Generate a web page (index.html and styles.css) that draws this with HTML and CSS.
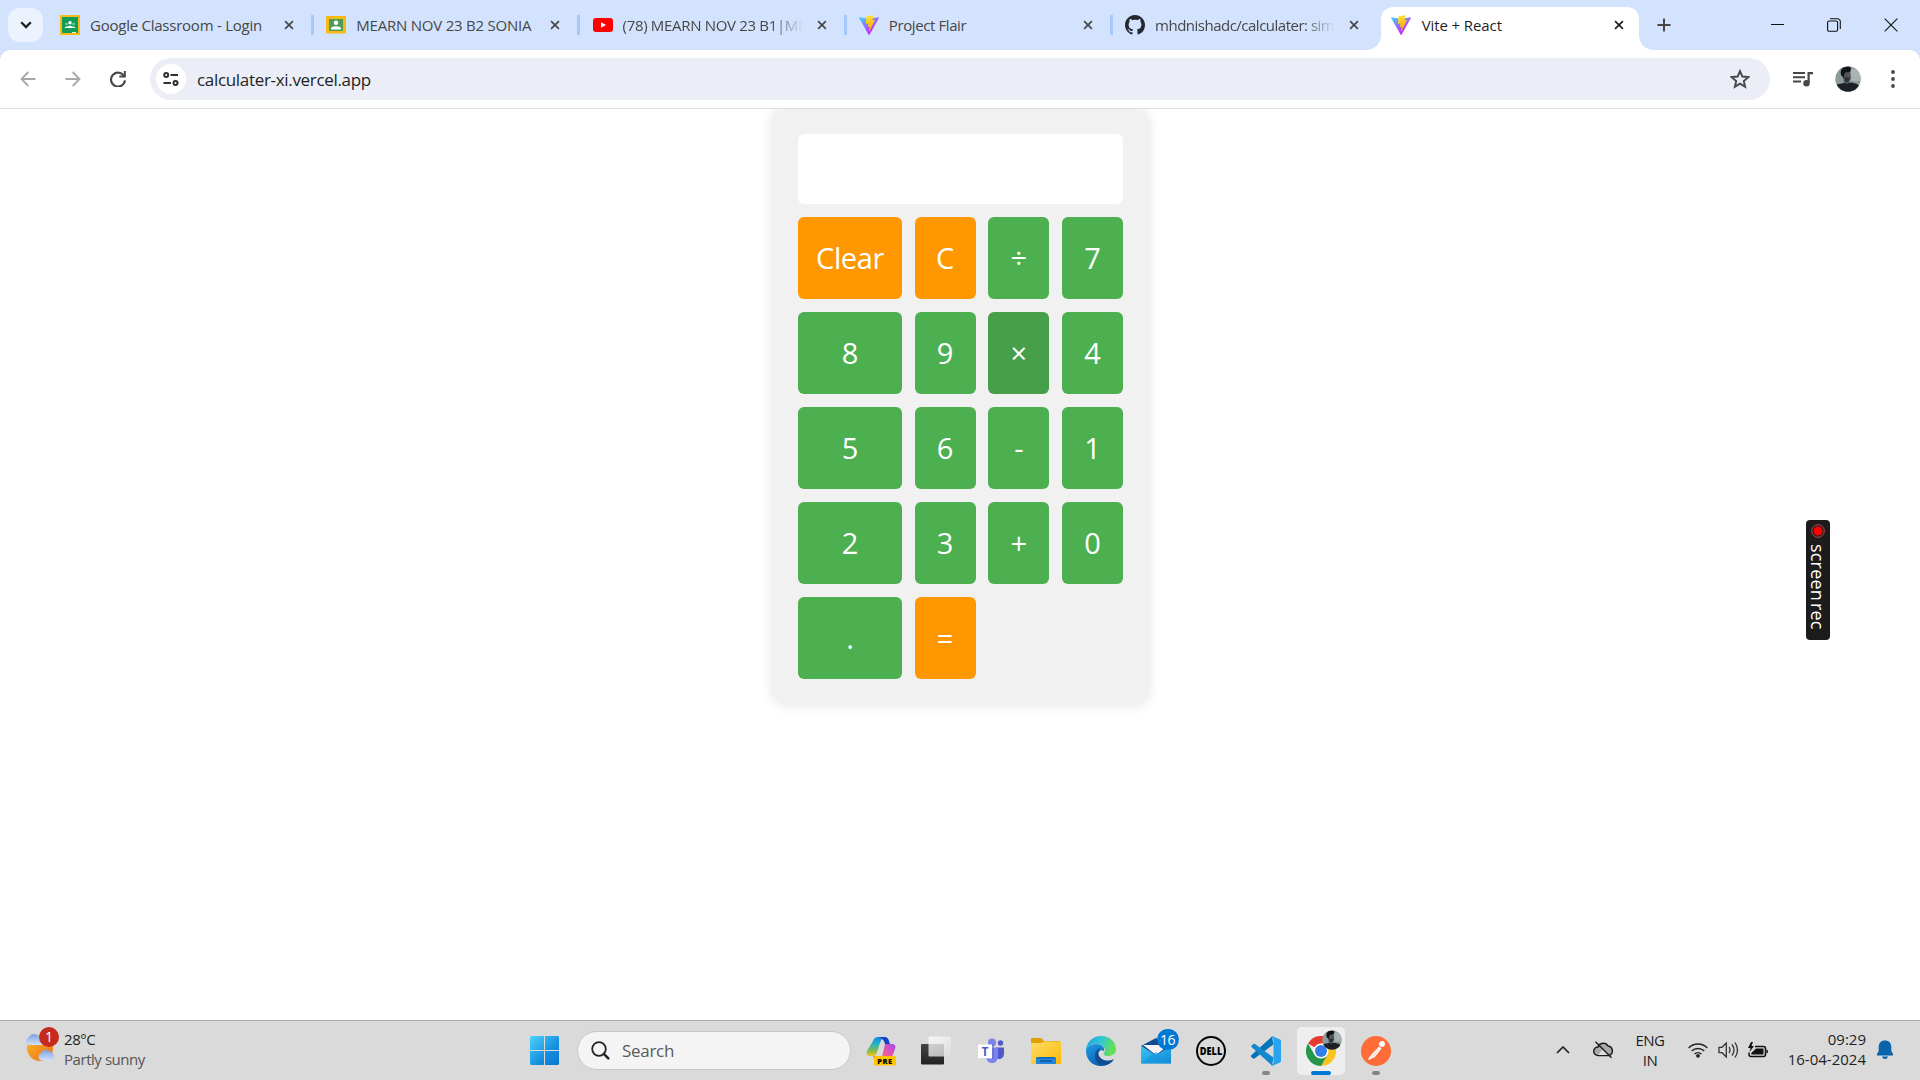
FILE: index.html
```html
<!DOCTYPE html>
<html lang="en">
<head>
<meta charset="utf-8">
<title>Vite + React</title>
<link rel="stylesheet" href="styles.css">
</head>
<body>
<svg class="defs" width="0" height="0">
  <defs>
    <linearGradient id="vA" x1="-.8%" x2="57.6%" y1="8%" y2="78%"><stop offset="0" stop-color="#41D1FF"/><stop offset="1" stop-color="#BD34FE"/></linearGradient>
    <linearGradient id="vB" x1="43%" x2="50%" y1="2%" y2="89%"><stop offset="0" stop-color="#FFEA83"/><stop offset=".08" stop-color="#FFDD35"/><stop offset="1" stop-color="#FFA800"/></linearGradient>
    <linearGradient id="win" gradientUnits="userSpaceOnUse" x1="0" y1="0" x2="29" y2="29"><stop offset="0" stop-color="#4fd3fb"/><stop offset=".6" stop-color="#1590de"/><stop offset="1" stop-color="#0775d0"/></linearGradient>
    <linearGradient id="cloud" x1="0" y1="0" x2="0" y2="1"><stop offset="0" stop-color="#7f9fe0"/><stop offset="1" stop-color="#cfe2fb"/></linearGradient>
    <linearGradient id="sun" x1="0" y1="0" x2="1" y2="1"><stop offset="0" stop-color="#f9ba28"/><stop offset="1" stop-color="#ef6d17"/></linearGradient>
    <linearGradient id="copA" x1="0" y1="0" x2="0" y2="1"><stop offset="0" stop-color="#1687e8"/><stop offset=".35" stop-color="#22b4c8"/><stop offset=".7" stop-color="#7bbd50"/><stop offset="1" stop-color="#f4c414"/></linearGradient>
    <linearGradient id="copB" x1="0" y1="1" x2="1" y2="0"><stop offset="0" stop-color="#fb7a55"/><stop offset=".5" stop-color="#e958a8"/><stop offset="1" stop-color="#9f4bea"/></linearGradient>
    <linearGradient id="folder" x1="0" y1="0" x2="1" y2="1"><stop offset="0" stop-color="#ffdd68"/><stop offset="1" stop-color="#fbb908"/></linearGradient>
    <linearGradient id="edgeA" x1="0" y1="0" x2="1" y2=".3"><stop offset="0" stop-color="#1a9fe0"/><stop offset=".5" stop-color="#30c4d8"/><stop offset="1" stop-color="#66e052"/></linearGradient>
    <linearGradient id="edgeB" x1="0" y1="0" x2=".7" y2="1"><stop offset="0" stop-color="#1b9de2"/><stop offset="1" stop-color="#0c57ac"/></linearGradient>
    <linearGradient id="mail" x1="0" y1="0" x2="1" y2="1"><stop offset="0" stop-color="#37c9f3"/><stop offset="1" stop-color="#1286d6"/></linearGradient>
    <linearGradient id="tvA" x1="0" y1="0" x2="0" y2="1"><stop offset="0" stop-color="#444"/><stop offset="1" stop-color="#222"/></linearGradient>
    <linearGradient id="tvB" x1="0" y1="0" x2="1" y2="1"><stop offset="0" stop-color="#fff"/><stop offset="1" stop-color="#ddd"/></linearGradient>
    <symbol id="vite" viewBox="0 0 256 257"><path fill="url(#vA)" d="M255.153 37.938L134.897 252.976c-2.483 4.44-8.862 4.466-11.382.048L.875 37.958c-2.746-4.814 1.371-10.646 6.827-9.67l120.385 21.517a6.537 6.537 0 0 0 2.322-.004l117.867-21.483c5.438-.991 9.574 4.796 6.877 9.62Z"/><path fill="url(#vB)" d="M185.432.063L96.44 17.501a3.268 3.268 0 0 0-2.634 3.014l-5.474 92.456a3.268 3.268 0 0 0 3.997 3.378l24.777-5.718c2.318-.535 4.413 1.507 3.936 3.838l-7.361 36.047c-.495 2.426 1.782 4.5 4.151 3.78l15.304-4.649c2.372-.72 4.652 1.36 4.15 3.788l-11.698 56.621c-.732 3.542 3.979 5.473 5.943 2.437l1.313-2.028l72.516-144.72c1.215-2.423-.88-5.186-3.54-4.672l-25.505 4.922c-2.396.462-4.435-1.77-3.759-4.114l16.646-57.705c.677-2.35-1.37-4.583-3.769-4.113Z"/></symbol>
    <symbol id="x" viewBox="0 0 12 12"><path d="M1.3 1.3 10.7 10.7M10.7 1.3 1.3 10.7" stroke="currentColor" stroke-width="2" fill="none"/></symbol>
    <symbol id="face" viewBox="0 0 26 26"><clipPath id="fc"><circle cx="13" cy="13" r="12.7"/></clipPath><g clip-path="url(#fc)"><path fill="#8c9b9b" d="M0 0h26v26H0z"/><path fill="#a9b3b2" d="M16 3h10v12H16z"/><path fill="#1c2128" d="M0 26c1-6 1-8 4-8l5-1 7-.5c5 1 7 1 8 4l2 6z"/><path fill="#515557" d="M8 6h7l1 6-2 4-1 2-4-1-1-6z"/><path fill="#111417" d="M6 9c-1-5 1-8 5-8 3-1 5 0 5 2l-1 3-5 .5-1 3v3z"/><path fill="#292f33" d="m10 11 5 1-2 4-3-1z"/></g></symbol>
  </defs>
</svg>

<header class="tabstrip">
  <button class="tab-search"><svg width="12" height="8" viewBox="0 0 12 8"><path d="M1.2 1.2 6 6l4.800-4.800" fill="none" stroke="#1f1f1f" stroke-width="2.300"/></svg></button>
  <div class="tab tab-first">
    <svg class="fav" viewBox="0 0 20 20"><rect width="20" height="20" rx="1" fill="#f9bb11"/><path fill="#109d58" d="M2 2h16v16H2z"/><g fill="#fff"><circle cx="10" cy="7.800" r="1.700"/><circle cx="6.500" cy="9" r="1" opacity=".7"/><circle cx="13.500" cy="9" r="1" opacity=".7"/><path d="M4.500 13c.5-1.500 2-1.500 3-1.500 1.500-1 3.500-1 5 0 1 0 2.500 0 3 1.500zM12 17h4v1h-4z"/></g></svg>
    <span class="title t1">Google Classroom - Login</span><svg class="close"><use href="#x"/></svg>
  </div>
  <div class="tab">
    <svg class="fav" viewBox="0 0 20 20"><rect y="1" width="20" height="17.500" rx="1.300" fill="#f9bb11"/><path fill="#4f9b58" d="M3 4h14v12H3z"/><g fill="#fff"><circle cx="10" cy="7.700" r="2.200"/><path d="M5 14.500v-1c0-3 10-3 10 0v1z"/></g></svg>
    <span class="title t2">MEARN NOV 23 B2 SONIA</span><svg class="close"><use href="#x"/></svg>
  </div>
  <div class="tab">
    <svg class="fav" viewBox="0 0 20 20"><rect y="3" width="20" height="14" rx="3" fill="#f00"/><path fill="#fff" d="m8 7.300 5 2.700-5 2.700z"/></svg>
    <span class="title t3">(78) MEARN NOV 23 B1|ME</span><svg class="close"><use href="#x"/></svg>
  </div>
  <div class="tab">
    <svg class="fav"><use href="#vite"/></svg>
    <span class="title t4">Project Flair</span><svg class="close"><use href="#x"/></svg>
  </div>
  <div class="tab tab-last">
    <svg class="fav" viewBox="0 0 16 16"><path fill="#24292f" d="M8 0C3.580 0 0 3.580 0 8c0 3.540 2.290 6.530 5.470 7.590.4.070.55-.17.55-.38 0-.19-.01-.82-.01-1.490-2.010.37-2.530-.49-2.690-.94-.09-.23-.48-.94-.82-1.130-.28-.15-.68-.52-.01-.53.63-.01 1.080.58 1.230.82.72 1.210 1.870.87 2.330.66.07-.52.28-.87.51-1.070-1.780-.2-3.640-.89-3.640-3.950 0-.87.31-1.590.82-2.150-.08-.2-.36-1.020.08-2.120 0 0 .67-.21 2.200.82.64-.18 1.320-.27 2-.27s1.360.09 2 .27c1.530-1.040 2.200-.82 2.200-.82.44 1.100.16 1.920.08 2.120.51.56.82 1.270.82 2.150 0 3.070-1.870 3.750-3.650 3.950.29.25.54.73.54 1.480 0 1.070-.01 1.930-.01 2.200 0 .21.15.46.55.38A8.010 8.010 0 0 0 16 8c0-4.420-3.580-8-8-8z"/></svg>
    <span class="title t5">mhdnishadc/calculater: sim</span><svg class="close"><use href="#x"/></svg>
  </div>
  <div class="tab active">
    <svg class="fav"><use href="#vite"/></svg>
    <span class="title t6">Vite + React</span><svg class="close"><use href="#x"/></svg>
  </div>
  <svg class="newtab" width="14" height="14" viewBox="0 0 14 14"><path d="M7 .5v13M.5 7h13" stroke="#474747" stroke-width="2"/></svg>
  <div class="winctl">
    <svg width="13" height="14" viewBox="0 0 13 14"><path d="M0 6.500h13" stroke="#111"/></svg>
    <svg width="14" height="14" viewBox="0 0 14 14"><rect x=".6" y="3" width="10" height="10.300" rx="1.500" fill="none" stroke="#111" stroke-width="1.100"/><path d="M3 .8h7.500a2.800 2.800 0 0 1 2.800 2.800V11" fill="none" stroke="#111" stroke-width="1.100"/></svg>
    <svg width="14" height="14" viewBox="0 0 14 14"><path d="m.7.7 12.600 12.600M13.300.7.7 13.300" stroke="#111" stroke-width="1.100"/></svg>
  </div>
</header>

<nav class="toolbar">
  <svg class="nav-ico" width="16" height="16" viewBox="0 0 16 16"><path d="M15.500 8H1.500M8.300 1 1.500 8l6.800 7" fill="none" stroke="#a8a8a8" stroke-width="1.800"/></svg>
  <svg class="nav-ico" width="16" height="16" viewBox="0 0 16 16"><path d="M.5 8h14M7.700 1l6.800 7-6.800 7" fill="none" stroke="#a8a8a8" stroke-width="1.800"/></svg>
  <svg class="nav-ico" width="16" height="16" viewBox="0 0 16 16"><path d="M14.300 5.500A7 7 0 1 0 15 9.500" fill="none" stroke="#474747" stroke-width="2.200"/><path d="M15.800 0v6.500H9.300v-2h4.500V0z" fill="#474747"/></svg>
  <div class="omnibox">
    <span class="site"><svg width="16" height="14" viewBox="0 0 16 14"><g fill="none" stroke="#303030" stroke-width="2"><circle cx="3.200" cy="3" r="2"/><path d="M7.500 3H15M.5 11H8"/><circle cx="12.500" cy="11" r="2"/></g></svg></span>
    <span class="url">calculater-xi.vercel.app</span>
    <svg class="star" width="20" height="20" viewBox="0 0 20 20"><path d="m10 2.200 2.300 5.300 6 .6-4.500 3.900 1.300 5.700L10 14.700l-5.100 3 1.300-5.700-4.500-3.900 6-.6z" fill="none" stroke="#474747" stroke-width="1.900"/></svg>
  </div>
  <svg class="media" width="20" height="16" viewBox="0 0 20 16"><g fill="#474747"><path d="M0 1h12v2H0zM0 5.200h12v2H0zM0 9.400h8v2H0zM14.500 1H20v2.200h-3.300V12h-2.200z"/><circle cx="13.500" cy="12.300" r="3.200"/></g></svg>
  <svg class="avatar" width="26" height="26"><use href="#face"/></svg>
  <svg width="4" height="18" viewBox="0 0 4 18"><g fill="#474747"><circle cx="2" cy="2" r="1.900"/><circle cx="2" cy="9" r="1.900"/><circle cx="2" cy="16" r="1.900"/></g></svg>
</nav>

<main class="page">
  <section class="calculator">
    <div class="display"></div>
    <div class="keys">
      <button class="key op word">Clear</button><button class="key op">C</button><button class="key">÷</button><button class="key">7</button>
      <button class="key">8</button><button class="key">9</button><button class="key hover">×</button><button class="key">4</button>
      <button class="key">5</button><button class="key">6</button><button class="key">-</button><button class="key">1</button>
      <button class="key">2</button><button class="key">3</button><button class="key">+</button><button class="key">0</button>
      <button class="key">.</button><button class="key op">=</button>
    </div>
  </section>
  <aside class="recorder">
    <svg width="14" height="14" viewBox="0 0 14 14"><circle cx="7" cy="7" r="6.300" fill="none" stroke="#c9494e"/><circle cx="7" cy="7" r="4.500" fill="#f00"/></svg>
    <span>screen<i>rec</i></span>
  </aside>
</main>

<footer class="taskbar">
  <div class="weather">
    <div class="weather-ico">
      <svg width="31" height="30" viewBox="0 0 31 30"><circle cx="15" cy="15" r="13" fill="url(#sun)"/><path d="M4 12a4 4 0 0 1-.5-7.500 6 6 0 0 1 10-1.500l5 9z" fill="url(#cloud)"/><path d="M16 27.500a4 4 0 0 1 0-7.500 5 5 0 0 1 9-1 4.500 4.500 0 0 1 1.500 8.500z" fill="url(#cloud)"/></svg>
      <b class="alert">1</b>
    </div>
    <div class="weather-txt"><span>28°C</span><span class="cond">Partly sunny</span></div>
  </div>
  <div class="apps">
    <div class="slot start"><svg width="29" height="29" viewBox="0 0 29 29"><path fill="url(#win)" d="M1 0h13v14H0V1zM15 0h13l1 1v13H15zM0 15h14v14H1l-1-1zM15 15h14v13l-1 1H15z"/></svg></div>
    <div class="search"><svg width="19" height="19" viewBox="0 0 19 19"><circle cx="8" cy="8" r="6.800" fill="none" stroke="#222" stroke-width="1.800"/><path d="m12.800 12.800 4.500 4.500" stroke="#222" stroke-width="2.500" stroke-linecap="round"/></svg><span>Search</span></div>
    <div class="slot"><svg width="30" height="30" viewBox="0 0 30 30"><path fill="url(#copA)" d="M7 5c1-3 3-4 5-4h7c-3 1-4 3-5 6l-3 9c-1 3-2 4-5 4H4c-3 0-4-2-3-5z"/><path fill="#1445c7" d="M12 1h7c2 0 3 1 4 4l1 3h-5c-1-4-3-6-7-7z"/><path fill="url(#copB)" d="M19 8h7c3 0 4 2 3 5l-3 8c-1 3-3 4-6 4h-8c3 0 4-2 4-4z"/><path fill="#f6714e" d="M7 20h10v5h-6c-2 0-3-2-4-5z"/><rect x="8" y="20" width="22" height="9.500" rx="1.500" fill="#ffc400"/><text class="pre" x="19" y="27.600" text-anchor="middle">PRE</text></svg></div>
    <div class="slot"><svg width="30" height="30" viewBox="0 0 30 30"><rect y="8" width="23" height="20.500" rx="1" fill="url(#tvA)"/><rect x="7.500" y=".5" width="22.500" height="20" rx="1" fill="url(#tvB)" opacity=".78"/></svg></div>
    <div class="slot"><svg width="26" height="26" viewBox="0 0 26 26"><circle cx="14" cy="4.500" r="4" fill="#7b83eb"/><circle cx="22.500" cy="5" r="2.700" fill="#5059c9"/><path d="M18 9.500h8V16a5 5 0 0 1-8 4z" fill="#5059c9"/><path d="M8 9.500h12V18a6 6 0 0 1-12 2z" fill="#7b83eb"/><path d="M2 7h14v14H2z" fill="#4c55a8" opacity=".35"/><rect y="6.500" width="14" height="14" fill="#fff"/><text class="tee" x="7" y="17.800" text-anchor="middle">T</text></svg></div>
    <div class="slot"><svg width="30" height="28" viewBox="0 0 30 28"><path fill="#dfa000" d="M0 2q0-1 1-1h8q2 0 3 2l1 1h16v5H0z"/><path fill="url(#folder)" d="M0 7q0-1 1-1h9l3-1.500h16q1 0 1 1V27H0z"/><path fill="#0c65b8" d="M5 27v-5q0-2 2-2h16q2 0 2 2v5z"/><path fill="#2186dd" d="M5 27v-4q0-1.500 2-1.500h16q2 0 2 1.500v4z"/><path d="M9 24h12" stroke="#0a4f95" stroke-width="1.400"/></svg></div>
    <div class="slot"><svg width="30" height="30" viewBox="0 0 30 30"><path fill="url(#edgeB)" d="M0 15c0-4 4-7 10-7 7 0 9 4 8 7-3-2-7 1-6 5 1 6 8 7 15 4-3 4-7 6-12 6C7 30 0 24 0 15z"/><path fill="url(#edgeA)" d="M0 15C0 7 6 0 15 0s15 6 15 13c0 5-4 7-8 7-4 0-5-2-4-3 2-2 2-8-7-9C5 7 1 11 0 15z"/><path fill="#104d91" d="M9 20c0-4 2-7 6-8-4 3-3 9 1 11 3 2 8 2 12 0-2 4-7 6.500-11 6C12 29 9 25 9 20z"/></svg></div>
    <div class="slot mail"><svg width="30" height="26" viewBox="0 0 30 26"><path fill="#114b91" d="M0 8 15 0l15 8-15 10z"/><path fill="#f5f5f5" d="M2 7h26L15 17z"/><path fill="url(#mail)" d="m0 8 15 9.500L30 8v17.500H0z"/><path fill="#1696dc" opacity=".65" d="M0 25.500 15 14l15 11.500z"/></svg><b class="count">16</b></div>
    <div class="slot"><svg width="30" height="30" viewBox="0 0 30 30"><circle cx="15" cy="15" r="14" fill="none" stroke="#050505" stroke-width="2"/><text class="dell" x="3.800" y="18.600" textLength="22.500" lengthAdjust="spacingAndGlyphs">DELL</text></svg></div>
    <div class="slot run"><svg width="30" height="30" viewBox="0 0 30 30"><path fill="#0075b9" d="M0 19.500 21 .5l1.500 8L3.500 22.500Q2 23 .8 21.500-.5 20.500 0 19.500z"/><path fill="#1288d0" d="M0 10.500Q2 7 4 8l18.500 13.500L21 29.500z"/><path fill="#28a3ee" d="M21 0l8 3.500q1 .5 1 2v19q0 1.500-1 2L21 30l-1-1 2.500-2V3L20 1z"/></svg></div>
    <div class="slot run current"><div class="tile"><svg width="30" height="30" viewBox="0 0 30 30"><path fill="#e33b2e" d="M15 15 2 7.500A15 15 0 0 1 28 7.500H15z"/><path fill="#fcc31e" d="M28 7.500A15 15 0 0 1 15 30l6.500-11.500L15 7.500z"/><path fill="#25964a" d="M2 7.500A15 15 0 0 0 15 30l6.500-11.300H15L8.500 18.700z"/><circle cx="15" cy="15" r="7.500" fill="#fff"/><circle cx="15" cy="15" r="6" fill="#327de8"/></svg><svg class="profile" width="20" height="20"><use href="#face"/></svg></div></div>
    <div class="slot run"><svg width="30" height="30" viewBox="0 0 30 30"><circle cx="15" cy="15" r="15" fill="#ff6c37"/><circle cx="21" cy="8" r="2.900" fill="#fff"/><path d="m18.500 11-7.500 8-3.500 4.500 6-3 6.500-8.500" fill="#ffd3c3" stroke="#fff" stroke-width="1.300"/></svg></div>
  </div>
  <div class="tray">
    <svg class="up" width="14" height="8" viewBox="0 0 14 8"><path d="m1 7 6-6 6 6" fill="none" stroke="#222" stroke-width="1.700"/></svg>
    <svg class="onedrive" width="21" height="18" viewBox="0 0 21 18"><path d="M5 14.500a4.200 4.200 0 0 1 0-8.500A5.500 5.500 0 0 1 15 5a4.900 4.900 0 0 1 1 9.500z" fill="#aaa" stroke="#1b1b1b" stroke-width="1.500"/><path d="m5 14 5-6 6 6z" fill="#ddd"/><path d="m2.500.8 16 16" stroke="#1b1b1b" stroke-width="1.500"/></svg>
    <div class="lang"><span>ENG</span><span>IN</span></div>
    <svg class="wifi" width="20" height="16" viewBox="0 0 20 16"><g fill="none" stroke="#222" stroke-width="1.500"><path d="M.7 6a13 13 0 0 1 18.600 0M3.700 9a9 9 0 0 1 12.600 0M6.600 12a5 5 0 0 1 6.800 0"/></g><circle cx="10" cy="13.800" r="1.900" fill="#222"/></svg>
    <svg class="vol" width="21" height="18" viewBox="0 0 21 18"><g fill="none" stroke="#333" stroke-width="1.300"><path d="M1 6.300h3L8.300 2v14L4 11.700H1z"/><path d="M11 6q2 3 0 6M14 3.500q4 5.500 0 11M17 1.500q5 7.500 0 15"/></g></svg>
    <svg class="bat" width="20" height="17" viewBox="0 0 20 17"><path d="M7 4.500h8.500q2 0 2 2v6q0 2-2 2H3q-2 0-2-2v-2" fill="none" stroke="#111" stroke-width="1.500"/><path d="M8 6.500h7.500v6H3.300V11zM18.500 7.500q1.500 0 1.500 2t-1.500 2z" fill="#111"/><path d="m3 0-3 6h2.500L1.500 10l4.500-6H3.500L5 0z" fill="#111"/></svg>
    <div class="clock"><span class="time">09:29</span><span>16-04-2024</span></div>
    <svg class="bell" width="16" height="20" viewBox="0 0 16 20"><path d="M8 .5c-4 0-6.300 2.700-6.300 6.500V11L0 14v1.500h16V14l-1.700-3V7C14.300 3.200 12 .5 8 .5zM5 16.500h6q-.5 2.500-3 2.500t-3-2.500z" fill="#0b63ab"/></svg>
  </div>
</footer>
</body>
</html>
```
FILE: styles.css
```css
* { box-sizing: border-box; }
body {
  margin: 0; width: 1920px; height: 1080px; overflow: hidden;
  display: flex; flex-direction: column;
  background: #fff; color: #1f1f1f;
  font-family: "Open Sans", "Noto Sans", sans-serif;
}
svg { display: block; flex: none; }
button { border: 0; padding: 0; font-family: inherit; }
.defs { position: absolute; }

.tabstrip { height: 50px; flex: none; display: flex; align-items: center; background: #d3e3fd; padding-left: 8px; }
.tab-search { width: 35px; height: 34px; border-radius: 12px; background: #ecf2fe; display: grid; place-items: center; }
.tab { width: 266.250px; height: 20px; flex: none; display: flex; align-items: center; padding-left: 12.300px; border-right: 3px solid #a8c7fa; }
.tab-first { width: 271px; padding-left: 17px; }
.tab-last { border-color: transparent; }
.fav { width: 20px; height: 20px; }
.title { width: 180px; flex: none; margin-left: 10px; font-size: 15px; line-height: 24px; white-space: nowrap; color: #474747; }
.t1 { letter-spacing: -.24px; }
.t2 { letter-spacing: -.22px; }
.t3 { letter-spacing: -.32px; }
.t4 { letter-spacing: -.4px; }
.t5 { letter-spacing: -.5px; }
.t3, .t5 { -webkit-mask-image: linear-gradient(90deg, #000 148px, transparent 180px); }
.close { width: 10px; height: 10px; margin-left: 14px; color: #474747; }
.active { position: relative; width: 258px; height: 43px; margin: 7px 0 0 2px; padding: 0 0 7px 10px; border: 0; border-radius: 12px 12px 0 0; background: #fff; }
.active::before, .active::after { content: ""; position: absolute; bottom: 0; width: 14px; height: 14px; }
.active::before { right: 100%; background: radial-gradient(circle at 0 0, transparent 13.500px, #fff 14px); }
.active::after { left: 100%; background: radial-gradient(circle at 100% 0, transparent 13.500px, #fff 14px); }
.active .title, .active .close { color: #1f1f1f; }
.active .title { margin-left: 10.700px; letter-spacing: -.1px; }
.active .close { margin-left: 12px; }
.newtab { margin-left: 17.500px; }
.winctl { display: flex; gap: 43px; margin-left: auto; padding-right: 22px; }

.toolbar { height: 59px; flex: none; display: flex; align-items: center; padding: 0 26px 0 20px; border-bottom: 1px solid #dfdfdf; background: #fff; position: relative; }
.toolbar::before { content: ""; position: absolute; inset: 0 0 auto; height: 10px; background: radial-gradient(circle at 10px 10px, transparent 9.500px, #d3e3fd 10px) left / 10px 10px no-repeat, radial-gradient(circle at 0 10px, transparent 9.500px, #d3e3fd 10px) right / 10px 10px no-repeat; }
.nav-ico { margin-right: 29px; }
.nav-ico + .nav-ico + .nav-ico { margin-right: 24px; }
.omnibox { width: 1620px; height: 42px; display: flex; align-items: center; border-radius: 21px; background: #ebeef7; padding: 0 20px 0 6px; flex: none; }
.site { width: 30px; height: 30px; border-radius: 50%; background: #fff; display: grid; place-items: center; }
.url { font-size: 17px; letter-spacing: -.32px; margin-left: 11px; }
.star { margin-left: auto; }
.media { margin-left: 23px; }
.avatar { margin: 0 30px 0 22px; }

.page { flex: 1; position: relative; overflow: hidden; padding-left: 1px; }
.calculator { width: 375px; margin: 0 auto; padding: 25px; border-radius: 12.500px; background: #f1f1f1; box-shadow: 0 0 12.500px rgba(0, 0, 0, .13); }
.display { height: 70px; margin-bottom: 13px; border-radius: 6px; background: #fff; }
.keys { display: grid; grid-template-columns: 104px 61px 61px 61px; grid-auto-rows: 82px; row-gap: 13px; justify-content: space-between; }
.key { border-radius: 6px; background: #4caf50; color: #fff; font-size: 29px; padding-bottom: 1px; }
.op { background: #ff9800; }
.word { letter-spacing: -.4px; }
.hover { background: #45a049; }
.recorder { position: absolute; left: 1806px; top: 411px; width: 24px; height: 120px; border-radius: 4px; background: #1c1c1c; color: #fff; display: flex; flex-direction: column; align-items: center; gap: 6px; padding-top: 4px; }
.recorder span { writing-mode: vertical-rl; font-size: 18px; line-height: 20px; letter-spacing: .2px; }
.recorder i { font-style: normal; margin-top: 2px; }

.taskbar { height: 60px; flex: none; display: flex; align-items: center; background: #dadada; border-top: 1px solid #a9a9a9; font-size: 15px; }
.weather { width: 517px; display: flex; padding: 0 0 3px 25px; }
.weather-ico { position: relative; width: 39px; padding-top: 4px; }
.alert { position: absolute; left: 14px; top: -2px; width: 20px; height: 20px; border-radius: 50%; background: #c42b1c; color: #fff; font-weight: 400; font-size: 14px; line-height: 20px; text-align: center; }
.weather-txt { display: flex; flex-direction: column; line-height: 20px; letter-spacing: -.45px; }
.cond { color: #555; }
.apps { display: flex; align-items: center; }
.slot { position: relative; width: 55px; height: 59px; display: grid; place-items: center; }
.search { width: 274px; height: 39px; margin: 0 2.500px 0 5px; display: flex; align-items: center; gap: 12px; padding: 0 0 1px 13px; border-radius: 20px; background: #f4f4f4; border: 1px solid #c6c6c6; font-size: 17px; letter-spacing: -.3px; color: #5a5a5a; }
.pre { font: 800 7.500px "Open Sans", sans-serif; letter-spacing: .5px; }
.tee { font: 700 12px "Open Sans", sans-serif; fill: #5059c9; }
.dell { font: 800 10px "Open Sans", sans-serif; }
.count { position: absolute; left: 28px; top: 8px; width: 22px; height: 21px; border-radius: 11px; background: #0078d4; color: #fff; font-weight: 400; font-size: 14px; line-height: 21px; letter-spacing: -.5px; text-align: center; }
.run::after { content: ""; position: absolute; left: 23.500px; bottom: 5px; width: 8px; height: 4px; border-radius: 2px; background: #858585; }
.current::after { left: 17.500px; width: 20px; background: #0078d4; }
.tile { position: relative; width: 48px; height: 48px; border-radius: 5px; background: #eee; display: grid; place-items: center; }
.profile { position: absolute; left: 25px; top: 3px; }
.tray { display: flex; align-items: center; margin-left: auto; padding: 0 27px 1px 0; }
.up { margin-right: 22.500px; }
.onedrive { margin-right: 21.500px; }
.lang { width: 30px; text-align: center; display: flex; flex-direction: column; line-height: 20px; margin-right: 23px; padding-bottom: 1px; letter-spacing: -.5px; }
.wifi { margin-right: 10px; }
.vol { margin-right: 9px; }
.bat { margin-right: 20px; }
.clock { width: 78px; display: flex; flex-direction: column; align-items: flex-end; line-height: 20px; white-space: nowrap; margin-right: 11px; padding-bottom: 2px; }
```
